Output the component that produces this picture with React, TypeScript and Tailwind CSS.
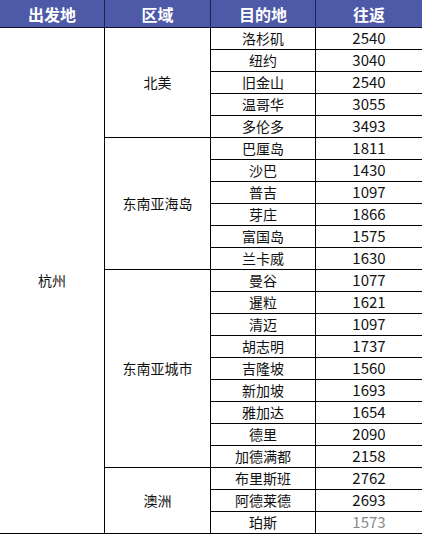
import React from "react";

const regions: { name: string; rows: [string, string][] }[] = [
  {
    name: "北美",
    rows: [
      ["洛杉矶", "2540"],
      ["纽约", "3040"],
      ["旧金山", "2540"],
      ["温哥华", "3055"],
      ["多伦多", "3493"],
    ],
  },
  {
    name: "东南亚海岛",
    rows: [
      ["巴厘岛", "1811"],
      ["沙巴", "1430"],
      ["普吉", "1097"],
      ["芽庄", "1866"],
      ["富国岛", "1575"],
      ["兰卡威", "1630"],
    ],
  },
  {
    name: "东南亚城市",
    rows: [
      ["曼谷", "1077"],
      ["暹粒", "1621"],
      ["清迈", "1097"],
      ["胡志明", "1737"],
      ["吉隆坡", "1560"],
      ["新加坡", "1693"],
      ["雅加达", "1654"],
      ["德里", "2090"],
      ["加德满都", "2158"],
    ],
  },
  {
    name: "澳洲",
    rows: [
      ["布里斯班", "2762"],
      ["阿德莱德", "2693"],
      ["珀斯", "1573"],
    ],
  },
];

export default function App() {
  return (
    <div
      className="w-[422px] h-[535px] bg-white text-[#111]"
      style={{ fontFamily: '"Noto Sans CJK SC", "Noto Sans", sans-serif' }}
    >
      <div className="flex h-[28px] bg-[#4e5aa8] text-white font-bold text-[16px] border-b border-[#10142e]">
        <div className="w-[105px] flex items-center justify-center border-r border-[#1c2350]">出发地</div>
        <div className="w-[106px] flex items-center justify-center border-r border-[#1c2350]">区域</div>
        <div className="w-[105px] flex items-center justify-center border-r border-[#1c2350]">目的地</div>
        <div className="flex-1 flex items-center justify-center">往返</div>
      </div>
      <div className="flex">
        <div className="w-[105px] flex items-center justify-center border-r border-b border-black text-[14px]">
          杭州
        </div>
        <div className="flex-1 flex flex-col">
          {regions.map((r) => (
            <div key={r.name} className="flex">
              <div className="w-[106px] flex items-center justify-center border-r border-b border-black text-[14px]">
                {r.name}
              </div>
              <div className="flex-1 flex flex-col">
                {r.rows.map(([d, p], i) => (
                  <div key={d} className="flex h-[22px] border-b border-black">
                    <div className="w-[105px] flex items-center justify-center border-r border-black text-[14px]">
                      {d}
                    </div>
                    <div
                      className={
                        p === "1573" && i === 2
                          ? "flex-1 flex items-center justify-center text-[15px] text-[#888]"
                          : "flex-1 flex items-center justify-center text-[15px]"
                      }
                    >
                      {p}
                    </div>
                  </div>
                ))}
              </div>
            </div>
          ))}
        </div>
      </div>
    </div>
  );
}
